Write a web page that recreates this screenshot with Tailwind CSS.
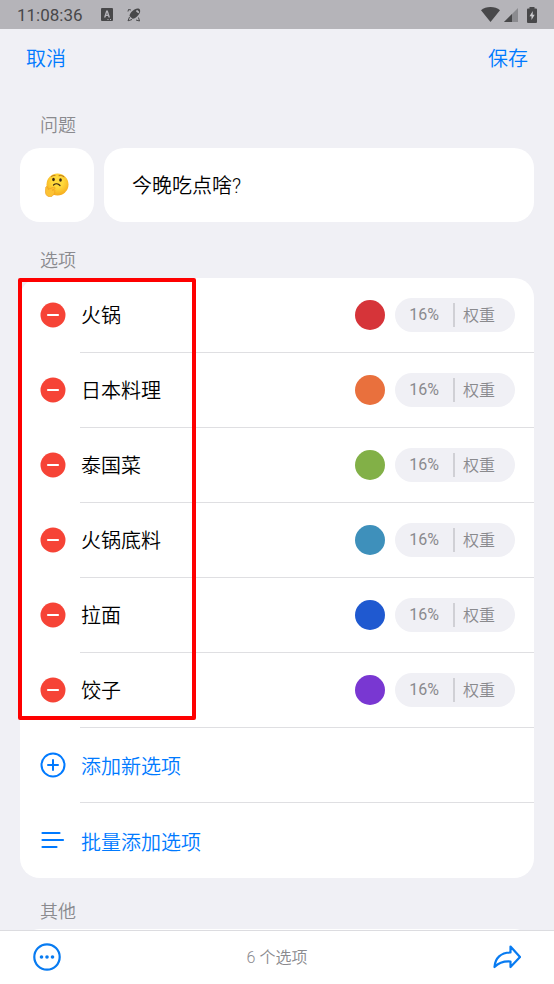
<!DOCTYPE html>
<html lang="zh-CN">
<head>
<meta charset="utf-8">
<meta name="viewport" content="width=device-width, initial-scale=1">
<title>今晚吃点啥?</title>
<script src="https://cdn.jsdelivr.net/npm/@tailwindcss/browser@4"></script>
</head>
<body class="flex h-screen flex-col overflow-hidden bg-[#f0f0f5] font-[Roboto,'Noto_Sans_CJK_SC',sans-serif] font-[350] text-black">

<!-- Status bar -->
<div class="flex h-[29px] shrink-0 items-center bg-[#b5b4b9] pr-[17px] pl-[17px] text-[#48484a]">
  <span class="w-[68px] pt-px text-[17px] leading-7 font-normal">11:08:36</span>
  <svg class="ml-4 h-[13px] w-3" viewBox="0 0 12 13" fill="currentColor" aria-hidden="true"><path fill-rule="evenodd" d="M1 0h10a1 1 0 0 1 1 1v11a1 1 0 0 1-1 1H1a1 1 0 0 1-1-1V1a1 1 0 0 1 1-1zM5.200 2.500 3 9.500h1.500L5 8h2l.5 1.500H9L6.800 2.500zM6 4.500 6.700 6.800H5.300zM6.500 11v1h1v-1zM9 11v1h1v-1z"/></svg>
  <svg class="ml-[14px] h-[14px] w-[14px]" viewBox="0 0 14 14" aria-hidden="true"><path fill="currentColor" d="M8 1.200C10 .2 12.500.5 13 1.800c.6 1.800-.3 4-2 5.700-1.600 1.700-3.500 3.300-5.500 3.200L2.500 8C2.700 5.500 5.500 2.300 8 1.200z"/><path d="M10 3 11.300 4.200" stroke="#b5b4b9" stroke-width="1.800" stroke-linecap="round"/><path d="M1 3.500 1.500 1.500 4 2M2.500 9 1 12.800 5 11.500M9 12l3.500 1M11.500 9.500l1 3.500" fill="none" stroke="currentColor" stroke-width="1"/></svg>
  <svg class="ml-auto h-[15px] w-[19px]" viewBox="0 0 19 15" fill="currentColor" aria-hidden="true"><path d="M9.500 15 0 3.300C2.500 1.100 5.800 0 9.500 0S16.500 1.100 19 3.300z"/></svg>
  <svg class="ml-1 h-[14px] w-[14px]" viewBox="0 0 14 14" aria-hidden="true"><path d="M14 0v14H0z" fill="#8b8b8f"/><path d="M8 6v8H0z" fill="currentColor"/></svg>
  <svg class="ml-[9px] h-4 w-[10px]" viewBox="0 0 10 16" aria-hidden="true"><path d="M2.500 0h5v1.500H9a1 1 0 0 1 1 1V15a1 1 0 0 1-1 1H1a1 1 0 0 1-1-1V2.500a1 1 0 0 1 1-1h1.500z" fill="currentColor"/><path d="M5.800 4 2.500 9.300h2V13l3.200-5.200h-2z" fill="#c9c9cc"/></svg>
</div>

<header class="flex h-[58px] shrink-0 items-center justify-between px-[26px] pt-[2px] text-xl text-[#007aff]">
  <button type="button">取消</button>
  <button type="button">保存</button>
</header>

<main class="min-h-0 flex-1 overflow-hidden px-5 pt-[25px]">
  <section>
    <h2 class="pl-5 text-lg leading-7 text-[#8a8a8e]"><label for="question">问题</label></h2>
    <div class="mt-2 flex gap-[10px]">
      <button type="button" aria-label="选择表情" class="flex h-[74px] w-[74px] shrink-0 items-center justify-center rounded-[20px] bg-white">
        <svg class="h-6 w-6" viewBox="0 0 24 24" aria-hidden="true">
          <defs><radialGradient id="face" cx=".5" cy=".38" r=".65"><stop offset=".4" stop-color="#ffd93b"/><stop offset="1" stop-color="#f5a71b"/></radialGradient></defs>
          <circle cx="12.500" cy="11.500" r="11" fill="url(#face)"/>
          <path d="M6.500 3.500c1-.9 2.300-1.200 3.500-1M14 2.700c2-.5 3.700-.1 5 1.200" fill="none" stroke="#b5731c" stroke-width="1" stroke-linecap="round"/>
          <ellipse cx="8.500" cy="6.500" rx="1.300" ry="1.800" fill="#3d2915"/><ellipse cx="15.500" cy="7" rx="1.300" ry="1.800" fill="#3d2915"/>
          <path d="M8.500 12c2-1.700 4.800-1.400 6.500.5" fill="none" stroke="#3d2915" stroke-width="1.200" stroke-linecap="round"/>
          <path d="M.8 14c.8-1 1.900-.4 2 .8l.2 1.600 5.700-2.200c1.400-.5 2 1 .8 1.700l-2.300 1.200 2.200-.1c1 .2 1 1.300.1 1.700.6.500.4 1.500-.4 1.700.3 1-.3 1.500-1.100 1.500-.6 1.600-2.100 2-3.800 1.800C1.500 23.300.2 21 .4 18z" fill="#fcc234" stroke="#ec9a1c" stroke-width=".6"/>
        </svg>
      </button>
      <input id="question" type="text" value="今晚吃点啥?" class="h-[74px] min-w-0 flex-1 rounded-[20px] bg-white px-7 pb-[2px] text-xl outline-none">
    </div>
  </section>

  <section class="mt-[25px]">
    <h2 class="pl-5 text-lg leading-7 text-[#8a8a8e]">选项</h2>
    <div class="relative mt-[3px]">
      <ul id="options" class="rounded-[20px] bg-white">
        <li class="flex h-[75px] pl-5">
          <button type="button" aria-label="删除火锅" class="flex w-10 items-center pb-[2px]"><svg class="h-[26px] w-[26px]" viewBox="0 0 26 26"><circle cx="13" cy="13" r="12.500" fill="#f64336"/><path d="M8 13h10" stroke="#fff" stroke-width="2.200" stroke-linecap="round"/></svg></button>
          <div class="flex min-w-0 flex-1 items-center border-b border-[#dfdfe2] pr-[19px]">
            <input type="text" aria-label="选项名称" value="火锅" class="min-w-0 flex-1 bg-transparent pt-[2px] pl-px text-xl outline-none">
            <button type="button" aria-label="颜色" class="h-[30px] w-[30px] rounded-full bg-[#d63439]"></button>
            <button type="button" class="ml-[10px] flex h-[34px] w-30 items-center rounded-full bg-[#f0f0f5] text-base text-[#8a8a8e]"><span class="w-[58px] font-normal">16%</span><span class="h-6 w-[2px] bg-[#d0d0d5]"></span><span class="pt-[2px] pl-2">权重</span></button>
          </div>
        </li>
        <li class="flex h-[75px] pl-5">
          <button type="button" aria-label="删除日本料理" class="flex w-10 items-center pb-[2px]"><svg class="h-[26px] w-[26px]" viewBox="0 0 26 26"><circle cx="13" cy="13" r="12.500" fill="#f64336"/><path d="M8 13h10" stroke="#fff" stroke-width="2.200" stroke-linecap="round"/></svg></button>
          <div class="flex min-w-0 flex-1 items-center border-b border-[#dfdfe2] pr-[19px]">
            <input type="text" aria-label="选项名称" value="日本料理" class="min-w-0 flex-1 bg-transparent pt-[2px] pl-px text-xl outline-none">
            <button type="button" aria-label="颜色" class="h-[30px] w-[30px] rounded-full bg-[#e9703d]"></button>
            <button type="button" class="ml-[10px] flex h-[34px] w-30 items-center rounded-full bg-[#f0f0f5] text-base text-[#8a8a8e]"><span class="w-[58px] font-normal">16%</span><span class="h-6 w-[2px] bg-[#d0d0d5]"></span><span class="pt-[2px] pl-2">权重</span></button>
          </div>
        </li>
        <li class="flex h-[75px] pl-5">
          <button type="button" aria-label="删除泰国菜" class="flex w-10 items-center pb-[2px]"><svg class="h-[26px] w-[26px]" viewBox="0 0 26 26"><circle cx="13" cy="13" r="12.500" fill="#f64336"/><path d="M8 13h10" stroke="#fff" stroke-width="2.200" stroke-linecap="round"/></svg></button>
          <div class="flex min-w-0 flex-1 items-center border-b border-[#dfdfe2] pr-[19px]">
            <input type="text" aria-label="选项名称" value="泰国菜" class="min-w-0 flex-1 bg-transparent pt-[2px] pl-px text-xl outline-none">
            <button type="button" aria-label="颜色" class="h-[30px] w-[30px] rounded-full bg-[#82b047]"></button>
            <button type="button" class="ml-[10px] flex h-[34px] w-30 items-center rounded-full bg-[#f0f0f5] text-base text-[#8a8a8e]"><span class="w-[58px] font-normal">16%</span><span class="h-6 w-[2px] bg-[#d0d0d5]"></span><span class="pt-[2px] pl-2">权重</span></button>
          </div>
        </li>
        <li class="flex h-[75px] pl-5">
          <button type="button" aria-label="删除火锅底料" class="flex w-10 items-center pb-[2px]"><svg class="h-[26px] w-[26px]" viewBox="0 0 26 26"><circle cx="13" cy="13" r="12.500" fill="#f64336"/><path d="M8 13h10" stroke="#fff" stroke-width="2.200" stroke-linecap="round"/></svg></button>
          <div class="flex min-w-0 flex-1 items-center border-b border-[#dfdfe2] pr-[19px]">
            <input type="text" aria-label="选项名称" value="火锅底料" class="min-w-0 flex-1 bg-transparent pt-[2px] pl-px text-xl outline-none">
            <button type="button" aria-label="颜色" class="h-[30px] w-[30px] rounded-full bg-[#3e90bb]"></button>
            <button type="button" class="ml-[10px] flex h-[34px] w-30 items-center rounded-full bg-[#f0f0f5] text-base text-[#8a8a8e]"><span class="w-[58px] font-normal">16%</span><span class="h-6 w-[2px] bg-[#d0d0d5]"></span><span class="pt-[2px] pl-2">权重</span></button>
          </div>
        </li>
        <li class="flex h-[75px] pl-5">
          <button type="button" aria-label="删除拉面" class="flex w-10 items-center pb-[2px]"><svg class="h-[26px] w-[26px]" viewBox="0 0 26 26"><circle cx="13" cy="13" r="12.500" fill="#f64336"/><path d="M8 13h10" stroke="#fff" stroke-width="2.200" stroke-linecap="round"/></svg></button>
          <div class="flex min-w-0 flex-1 items-center border-b border-[#dfdfe2] pr-[19px]">
            <input type="text" aria-label="选项名称" value="拉面" class="min-w-0 flex-1 bg-transparent pt-[2px] pl-px text-xl outline-none">
            <button type="button" aria-label="颜色" class="h-[30px] w-[30px] rounded-full bg-[#1f59d0]"></button>
            <button type="button" class="ml-[10px] flex h-[34px] w-30 items-center rounded-full bg-[#f0f0f5] text-base text-[#8a8a8e]"><span class="w-[58px] font-normal">16%</span><span class="h-6 w-[2px] bg-[#d0d0d5]"></span><span class="pt-[2px] pl-2">权重</span></button>
          </div>
        </li>
        <li class="flex h-[75px] pl-5">
          <button type="button" aria-label="删除饺子" class="flex w-10 items-center pb-[2px]"><svg class="h-[26px] w-[26px]" viewBox="0 0 26 26"><circle cx="13" cy="13" r="12.500" fill="#f64336"/><path d="M8 13h10" stroke="#fff" stroke-width="2.200" stroke-linecap="round"/></svg></button>
          <div class="flex min-w-0 flex-1 items-center border-b border-[#dfdfe2] pr-[19px]">
            <input type="text" aria-label="选项名称" value="饺子" class="min-w-0 flex-1 bg-transparent pt-[2px] pl-px text-xl outline-none">
            <button type="button" aria-label="颜色" class="h-[30px] w-[30px] rounded-full bg-[#7937d2]"></button>
            <button type="button" class="ml-[10px] flex h-[34px] w-30 items-center rounded-full bg-[#f0f0f5] text-base text-[#8a8a8e]"><span class="w-[58px] font-normal">16%</span><span class="h-6 w-[2px] bg-[#d0d0d5]"></span><span class="pt-[2px] pl-2">权重</span></button>
          </div>
        </li>
        <li>
          <button type="button" class="flex h-[75px] w-full pl-5 text-xl text-[#007aff]">
            <span class="flex h-full w-10 items-center pb-[2px]"><svg class="h-[26px] w-[26px]" viewBox="0 0 26 26" fill="none" stroke="currentColor" stroke-width="2" stroke-linecap="round" aria-hidden="true"><circle cx="13" cy="13" r="11.500"/><path d="M8 13h10M13 8v10"/></svg></span>
            <span class="flex h-full flex-1 items-center border-b border-[#dfdfe2] pt-1 pl-px">添加新选项</span>
          </button>
        </li>
        <li>
          <button type="button" class="flex h-[75px] w-full pl-5 text-xl text-[#007aff]">
            <span class="flex h-full w-10 items-center pb-[2px]"><svg class="h-[26px] w-[26px]" viewBox="0 0 26 26" fill="none" stroke="currentColor" stroke-width="2.200" stroke-linecap="round" aria-hidden="true"><path d="M2.500 6h17M2.500 13h20.500M2.500 20h14"/></svg></span>
            <span class="flex h-full flex-1 items-center pt-1 pl-px">批量添加选项</span>
          </button>
        </li>
      </ul>
      <!-- Highlight frame around the option names -->
      <div class="pointer-events-none absolute top-0 -left-[2px] h-[442px] w-[178px] rounded-xs border-4 border-[#fe0000]"></div>
    </div>
  </section>

  <section class="mt-5">
    <h2 class="pl-5 text-lg leading-7 text-[#8a8a8e]">其他</h2>
    <div class="mt-[3px] h-[74px] rounded-[20px] bg-white"></div>
  </section>
</main>

<footer class="flex h-[54px] shrink-0 items-center justify-between border-t border-[#dcdce0] bg-white px-[33px] pb-px">
  <button type="button" aria-label="更多" class="text-[#087bf1]"><svg class="h-7 w-7" viewBox="0 0 28 28" fill="currentColor"><circle cx="14" cy="14" r="12.700" fill="none" stroke="currentColor" stroke-width="2.200"/><circle cx="8.500" cy="14" r="1.800"/><circle cx="14" cy="14" r="1.800"/><circle cx="19.500" cy="14" r="1.800"/></svg></button>
  <p class="pt-[2px] text-base text-[#8a8a8e]">6 个选项</p>
  <button type="button" aria-label="分享" class="text-[#087bf1]"><svg class="h-7 w-7" viewBox="0 0 28 28" fill="none" stroke="currentColor" stroke-width="2.200" stroke-linejoin="round"><path d="M17.500 3.500 27 14l-9.500 10v-5.500C11 18 6 19.500 1.500 24 2 15 8 9.500 17.500 9.500z"/></svg></button>
</footer>
</body>
</html>
